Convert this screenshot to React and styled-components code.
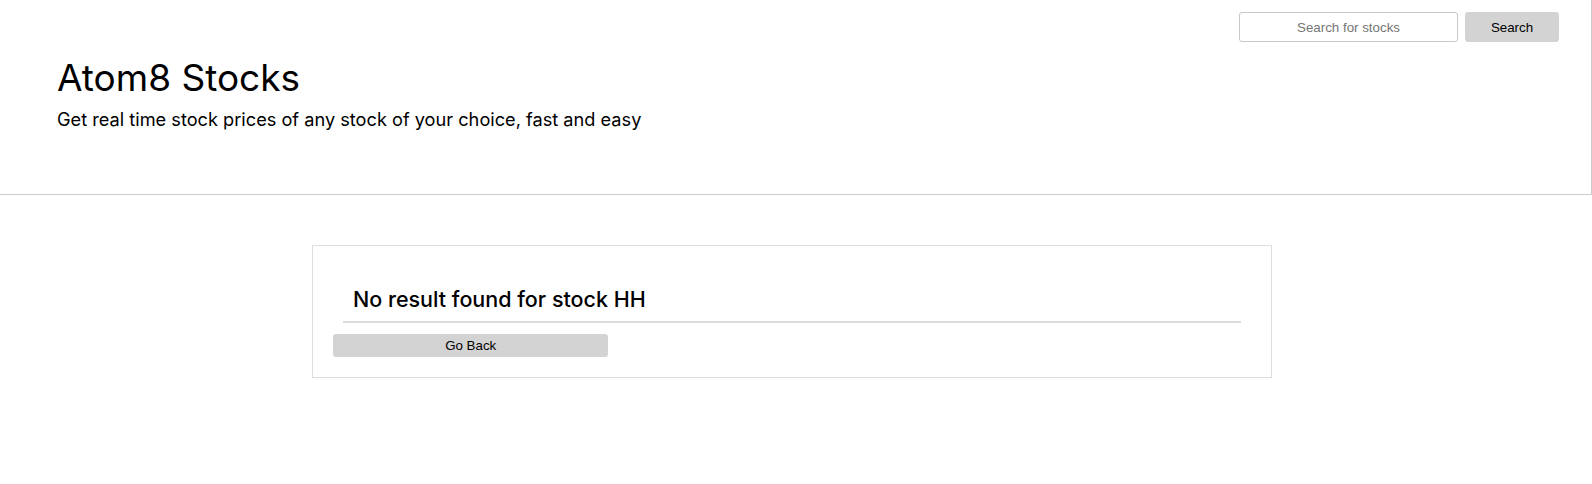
import styled, { createGlobalStyle } from 'styled-components';

const GlobalStyle = createGlobalStyle`
  body {
    margin: 0;
    background: #fff;
    font-family: Inter, "Open Sans", sans-serif;
    color: #000;
  }
`;

const Header = styled.header`
  height: 194px;
  border-right: 1px solid #ccc;
  border-bottom: 1px solid #ccc;
  display: flex;
  flex-direction: column;
`;

const SearchBar = styled.form`
  display: flex;
  justify-content: flex-end;
  gap: 7px;
  padding: 12px 32px 0 0;
`;

const SearchInput = styled.input`
  box-sizing: border-box;
  width: 219px;
  height: 30px;
  border: 1px solid #c8c8c8;
  border-radius: 3px;
  text-align: center;
  font-family: "Liberation Sans", Arial, sans-serif;
  font-size: 13.33px;
  outline: none;

  &::placeholder {
    color: #757575;
  }
`;

const GrayButton = styled.button`
  box-sizing: border-box;
  width: ${({ $width }) => $width || 'auto'};
  height: ${({ $height }) => $height || '30px'};
  border: none;
  border-radius: 3px;
  background: #d3d3d3;
  color: #000;
  font-family: "Liberation Sans", Arial, sans-serif;
  font-size: 13.33px;
  padding: 0;
  cursor: pointer;
`;

const Intro = styled.div`
  padding-left: 57px;
`;

const Title = styled.h1`
  margin: 13px 0 0;
  font-size: 37px;
  line-height: 45px;
  font-weight: 400;
`;

const Subtitle = styled.p`
  margin: 7px 0 0;
  font-size: 18.2px;
  line-height: 24px;
  font-weight: 400;
`;

const Card = styled.section`
  width: 960px;
  box-sizing: border-box;
  margin: 50px 0 0 312px;
  padding: 20px;
  border: 1px solid #ddd;
`;

const Message = styled.h3`
  margin: 20px 10px 11px;
  padding: 0 0 9px 10px;
  font-size: 21.5px;
  line-height: 26px;
  font-weight: 500;
  border-bottom: 2px solid #ddd;
`;

export default function App() {
  const query = 'HH';

  return (
    <>
      <GlobalStyle />
      <Header>
        <SearchBar onSubmit={(e) => e.preventDefault()}>
          <SearchInput type="text" placeholder="Search for stocks" />
          <GrayButton type="submit" $width="94px">Search</GrayButton>
        </SearchBar>
        <Intro>
          <Title>Atom8 Stocks</Title>
          <Subtitle>Get real time stock prices of any stock of your choice, fast and easy</Subtitle>
        </Intro>
      </Header>
      <Card>
        <Message>No result found for stock {query}</Message>
        <GrayButton type="button" $width="30%" $height="23px">Go Back</GrayButton>
      </Card>
    </>
  );
}
